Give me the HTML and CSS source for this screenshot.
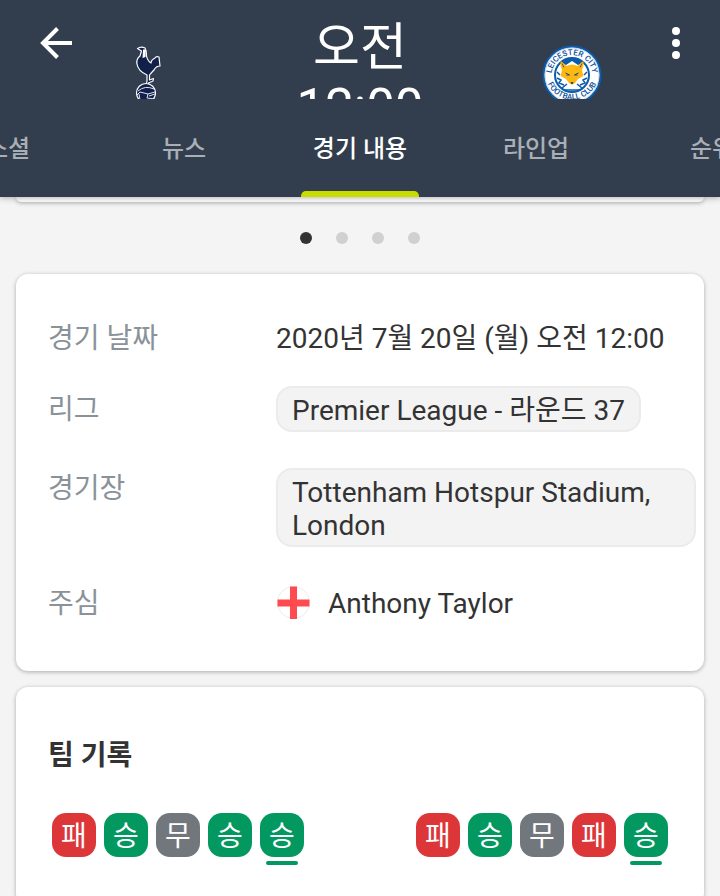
FILE: index.html
```html
<!DOCTYPE html>
<html lang="ko">
<head>
    <meta charset="utf-8">
    <meta name="viewport" content="width=device-width, initial-scale=1">
    <title>경기 내용</title>
    <link rel="stylesheet" href="styles.css">
</head>
<body>
    <header class="header">
        <div class="match-bar">
            <button type="button" class="icon-button back" aria-label="뒤로">
                <svg width="32" height="32" viewBox="0 0 32 32" fill="none" stroke="#fff" stroke-width="4">
                    <path d="M32 16H3M17.500 1.500L3 16l14.500 14.500"/>
                </svg>
            </button>
            <div class="team">
                <svg width="26" height="60" viewBox="0 0 26 60" role="img" aria-label="Tottenham Hotspur">
                    <path d="M2.500 3.500Q6 1 10 3Q12 6 11.500 11Q12.500 16 16 18Q16 15 20 13Q21 11 24 12L25 21Q21 21 19 25Q16 28 14.500 30L14.500 35L18.500 33.500L18 36L13.500 38L14 41L11 41L12 36L12 30Q3 26 2 19Q1 14 5 11L6.500 6Z" fill="#11204b" stroke="#fff" stroke-width="1.200" stroke-linejoin="round"/>
                    <path d="M8 4.500L11 4.500L10.500 12L7.500 13Z" fill="#fff"/>
                    <circle cx="11" cy="48" r="9.500" fill="#11204b" stroke="#fff" stroke-width="1.200"/>
                    <path d="M3 46Q10 40 19 44M2 50L5 47L13 49L20 47M5 55L4 49M13 49L12 53L20 54M14 51l6-2" fill="none" stroke="#dfe3ec" stroke-width="1"/>
                </svg>
            </div>
            <div class="kickoff">오전 12:00</div>
            <div class="team">
                <svg width="60" height="60" viewBox="0 0 60 60" role="img" aria-label="Leicester City">
                    <defs>
                        <path id="arc-top" d="M13 42A20.500 20.500 0 1 1 47 42"/>
                        <path id="arc-bottom" d="M3.500 28A26.500 26.500 0 0 0 56.500 28"/>
                    </defs>
                    <circle cx="30" cy="30" r="28.500" fill="#fff" stroke="#0b5cab" stroke-width="2"/>
                    <circle cx="30" cy="30" r="27" fill="none" stroke="#8db5db" stroke-width=".500"/>
                    <circle cx="30" cy="30" r="17" fill="#fff" stroke="#0b5cab" stroke-width="2"/>
                    <path d="M19 18Q24 13 30 13Q36 13 41 18L36 20L30 16L24 20Z" fill="#0b5cab"/>
                    <path d="M15 33l4 2-2 3 5 2M45 33l-4 2 2 3-5 2M20 43l5-4M40 43l-5-4M15 27l3 3M45 27l-3 3M22 45h16" fill="none" stroke="#0b5cab" stroke-width="1.500"/>
                    <path d="M18.500 16Q22 18 24.500 21Q30 18 35.500 21Q38 18 41.500 16Q42 21 40 25L41.500 31L36 34L33 38Q30 41 27 38L24 34L18.500 31L20 25Q18 21 18.500 16Z" fill="#fdb913"/>
                    <path d="M20 18.500l2 4M40 18.500l-2 4" fill="none" stroke="#28466b" stroke-width=".800"/>
                    <path d="M23.500 28l4 2h-3M36.500 28l-4 2h3M29 37.500h2L30 39Z" fill="none" stroke="#28466b" stroke-width="1"/>
                    <path d="M24 34l3 5-1 2ZM36 34l-3 5 1 2Z" fill="#fff"/>
                    <text class="crest-text"><textPath href="#arc-top" startOffset="50%">LEICESTER CITY</textPath></text>
                    <text class="crest-text"><textPath href="#arc-bottom" startOffset="50%">FOOTBALL CLUB</textPath></text>
                </svg>
            </div>
            <button type="button" class="icon-button more" aria-label="더보기">
                <svg width="8" height="32" viewBox="0 0 8 32" fill="#fff">
                    <circle cx="4" cy="4" r="4"/>
                    <circle cx="4" cy="16" r="4"/>
                    <circle cx="4" cy="28" r="4"/>
                </svg>
            </button>
        </div>
        <nav class="tabs">
            <a href="#social" class="tab">소셜</a>
            <a href="#news" class="tab">뉴스</a>
            <a href="#details" class="tab active" aria-current="page">경기 내용</a>
            <a href="#lineup" class="tab">라인업</a>
            <a href="#table" class="tab">순위</a>
        </nav>
    </header>

    <main class="content">
        <div class="card card-end"></div>
        <div class="pager">
            <span class="dot current"></span>
            <span class="dot"></span>
            <span class="dot"></span>
            <span class="dot"></span>
        </div>

        <dl class="card info" id="details">
            <div class="row">
                <dt>경기 날짜</dt>
                <dd>2020년 7월 20일 (월) 오전 12:00</dd>
            </div>
            <div class="row row-league">
                <dt>리그</dt>
                <dd><a href="#league" class="pill">Premier League - 라운드 37</a></dd>
            </div>
            <div class="row row-stadium">
                <dt>경기장</dt>
                <dd><a href="#stadium" class="pill">Tottenham Hotspur Stadium, London</a></dd>
            </div>
            <div class="row row-referee">
                <dt>주심</dt>
                <dd class="referee">
                    <svg width="34" height="34" viewBox="0 0 34 34" aria-hidden="true">
                        <circle cx="17.500" cy="16.500" r="16" fill="#fff" stroke="#ececec"/>
                        <path d="M14 .500h7v13h12.500v7H21V33h-7V20.500H1.500v-7H14z" fill="#ff4b50"/>
                    </svg>
                    Anthony Taylor
                </dd>
            </div>
        </dl>

        <section class="card record">
            <h2>팀 기록</h2>
            <div class="forms">
                <div class="form">
                    <span class="result loss">패</span>
                    <span class="result win">승</span>
                    <span class="result draw">무</span>
                    <span class="result win">승</span>
                    <span class="result win latest">승</span>
                </div>
                <div class="form">
                    <span class="result loss">패</span>
                    <span class="result win">승</span>
                    <span class="result draw">무</span>
                    <span class="result loss">패</span>
                    <span class="result win latest">승</span>
                </div>
            </div>
        </section>
    </main>
</body>
</html>
```
FILE: styles.css
```css
* {
    box-sizing: border-box;
}
body {
    display: flex;
    flex-direction: column;
    height: 100vh;
    margin: 0;
    overflow: hidden;
    background-color: #f4f4f4;
    color: #333;
    font-family: Roboto, "Noto Sans CJK KR", sans-serif;
    font-size: 28px;
    line-height: 33px;
}

/* header */
.header {
    flex: none;
    z-index: 1;
    background-color: #323e4d;
    color: #fff;
    box-shadow: 0 1px 6px rgba(0, 0, 0, 0.3);
}
.match-bar {
    display: grid;
    grid-template-columns: 112px 72px 1fr 72px 112px;
    align-items: start;
    height: 99px;
    overflow: hidden;
}
.icon-button {
    display: flex;
    margin-top: 27px;
    padding: 0;
    border: none;
    background: none;
    cursor: pointer;
}
.back {
    margin-left: 40px;
}
.more {
    justify-self: end;
    margin-right: 40px;
}
.team {
    display: flex;
    justify-content: center;
    padding-top: 45px;
}
.crest-text {
    fill: #0b4f9c;
    font-size: 8px;
    font-weight: 500;
    text-anchor: middle;
}
.kickoff {
    justify-self: center;
    width: 150px;
    padding-top: 18px;
    font-size: 51px;
    line-height: 60px;
    text-align: center;
}
.tabs {
    display: flex;
    justify-content: center;
    height: 98px;
    overflow: hidden;
}
.tab {
    display: flex;
    flex: 0 0 176px;
    flex-direction: column;
    align-items: center;
    justify-content: space-between;
    padding-top: 34px;
    color: #a9afb6;
    font-size: 24px;
    font-weight: 500;
    text-decoration: none;
}
.tab.active {
    color: #fff;
}
.tab.active::after {
    content: "";
    width: 118px;
    height: 6px;
    border-radius: 5px 5px 0 0;
    background-color: #c8dc00;
}

/* cards */
.content {
    flex: 1;
    min-height: 0;
    padding: 0 16px;
    overflow: hidden;
}
.card {
    margin: 0 0 16px;
    border-radius: 12px;
    background-color: #fff;
    box-shadow: 0 1px 4px rgba(0, 0, 0, 0.3);
}
.card-end {
    height: 5px;
    margin: 0;
    border-radius: 0 0 12px 12px;
}
.pager {
    display: flex;
    justify-content: center;
    gap: 24px;
    padding: 30px 0;
}
.dot {
    width: 12px;
    height: 12px;
    border-radius: 50%;
    background-color: #d0d0d0;
}
.dot.current {
    background-color: #333;
}

/* match info */
.info {
    padding: 48px 8px 44px 32px;
}
.row {
    display: grid;
    grid-template-columns: 228px 1fr;
    align-items: center;
}
.row-league {
    margin-top: 31px;
}
.row-stadium {
    align-items: start;
    margin-top: 36px;
}
.row-stadium dt {
    padding-top: 4px;
}
.row-referee {
    min-height: 48px;
    margin-top: 32px;
}
dt {
    color: #8a9299;
}
dd {
    display: flex;
    margin: 0;
}
.pill {
    padding: 6px 14px 3px;
    border: 2px solid #ebebeb;
    border-radius: 16px;
    background-color: #f3f3f3;
    color: #333;
    text-decoration: none;
}
.referee {
    align-items: center;
    gap: 18px;
}

/* team record */
.record {
    padding: 52px 32px 48px;
}
.record h2 {
    margin: 0 0 41px;
    font-size: 28px;
    font-weight: 700;
    line-height: 33px;
}
.forms {
    display: flex;
    justify-content: space-between;
    padding: 0 4px;
}
.form {
    display: flex;
    gap: 8px;
}
.result {
    position: relative;
    width: 44px;
    height: 44px;
    border-radius: 14px;
    color: #fff;
    line-height: 48px;
    text-align: center;
}
.win {
    background-color: #03985f;
}
.draw {
    background-color: #71777c;
}
.loss {
    background-color: #dc3639;
}
.latest::after {
    content: "";
    position: absolute;
    top: 48px;
    left: 6px;
    width: 32px;
    height: 4px;
    border-radius: 2px;
    background-color: #03985f;
}
```
